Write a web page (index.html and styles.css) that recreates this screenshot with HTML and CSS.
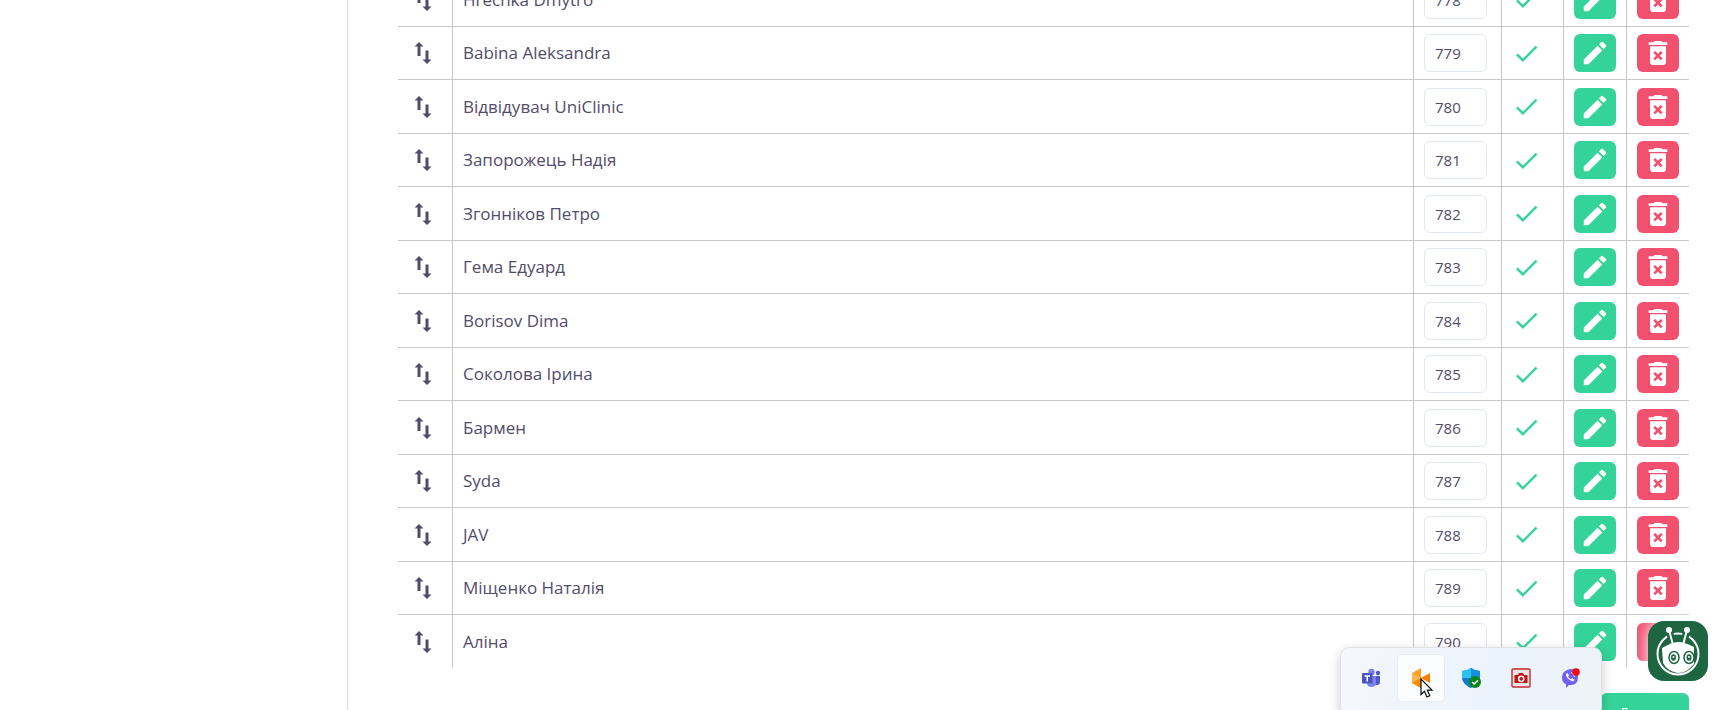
FILE: index.html
```html
<!DOCTYPE html>
<html lang="uk">
<head>
<meta charset="utf-8">
<meta name="viewport" content="width=device-width, initial-scale=1">
<title>Співробітники</title>
<link rel="stylesheet" href="styles.css">
</head>
<body>
<svg class="sprite" aria-hidden="true">
  <symbol id="sort" viewBox="0 0 18 22"><path d="M5 0 9.500 4.500H6.500V14H3.500V4.500H.5zM13 22 8.500 17.500H11.500V8.500H14.500V17.500H17.500z"/></symbol>
  <symbol id="check" viewBox="0 0 24 24"><path d="M9 16.200 4.800 12l-1.400 1.400L9 19 21 7l-1.400-1.400z"/></symbol>
  <symbol id="pencil" viewBox="0 0 24 24"><path d="M3 17.250V21h3.750L17.810 9.940l-3.750-3.750zM20.710 7.040a1 1 0 0 0 0-1.410l-2.340-2.340a1 1 0 0 0-1.410 0l-1.830 1.830 3.750 3.750z"/></symbol>
  <symbol id="trash" viewBox="0 0 24 24"><path fill-rule="evenodd" d="M6 19c0 1.100.9 2 2 2h8c1.100 0 2-.9 2-2V7H6zm2.460-7.120 1.410-1.410L12 12.590l2.120-2.120 1.410 1.410L13.410 14l2.120 2.120-1.410 1.410L12 15.410l-2.120 2.120-1.410-1.410L10.590 14zM15.500 4l-1-1h-5l-1 1H5v2h14V4z"/></symbol>
</svg>
<div class="layout">
  <aside class="sidebar"></aside>
  <main class="content">
    <table class="staff">
      <colgroup><col class="col-sort"><col><col class="col-order"><col class="col-check"><col class="col-edit"><col class="col-delete"></colgroup>
      <tbody id="rows"></tbody>
    </table>
    <div class="footer"><button class="submit" type="button">Додати</button></div>
  </main>
</div>

<button class="bot" type="button" aria-label="Чат-бот">
  <svg viewBox="0 0 60 60" aria-hidden="true">
    <circle cx="30" cy="33" r="20.500" fill="none" stroke="#fff" stroke-width="2"/>
    <path d="M21 9 25 24M39 9 35 24" stroke="#1e6542" stroke-width="7"/>
    <path d="M21 9 25 24M39 9 35 24" stroke="#fff" stroke-width="2"/>
    <circle cx="21" cy="9" r="3" fill="#fff"/><circle cx="39" cy="9" r="3" fill="#fff"/>
    <path d="M14 27Q24 21 30 21T46 26V43Q39 52 30 52 19 50 15 42z" fill="#fff"/>
    <g fill="#fff" stroke="#1e6542" stroke-width="1.500"><ellipse cx="26" cy="36.500" rx="5" ry="6"/><ellipse cx="41" cy="36.500" rx="5" ry="6"/></g>
    <ellipse cx="25.500" cy="36.500" rx="2.500" ry="3.200" fill="#1e6542"/><ellipse cx="41" cy="36.500" rx="2.500" ry="3.200" fill="#1e6542"/>
    <circle cx="25.500" cy="36" r="1" fill="#fff"/><circle cx="41" cy="36" r="1" fill="#fff"/>
  </svg>
</button>

<div class="tray">
  <button class="app" type="button" aria-label="Teams">
    <svg viewBox="0 0 20 20" aria-hidden="true"><circle cx="10.500" cy="4" r="3.200" fill="#7b83eb"/><circle cx="17" cy="5" r="2.200" fill="#5059c9"/><path d="M13 8h6v6q0 3-3 3h-3z" fill="#5059c9"/><path d="M6 8h9v7q0 4-4.500 4T6 15z" fill="#7b83eb"/><rect x="1" y="5" width="10.500" height="10.500" rx="1" fill="#4b53bc"/><path d="M3.500 8h5.500M6.250 8v5.500" stroke="#fff" stroke-width="1.500"/></svg>
  </button>
  <button class="app active" type="button" aria-label="Застосунок">
    <svg viewBox="0 0 20 20" aria-hidden="true"><path d="M1 5 10 0V20L1 15z" fill="#ffa126"/><path d="M1 5 10 10 1 15z" fill="#ffb650"/><path d="M1 15 10 10V20z" fill="#f58a08"/><path d="M10 10 19 5V15z" fill="#ff7b00"/></svg>
    <svg class="cursor" viewBox="0 0 13 20" aria-hidden="true"><path d="M1 1V16.500L4.500 13.200 7 19 9.800 17.800 7.300 12.200H12z" fill="#fff" stroke="#111" stroke-width="1.200"/></svg>
  </button>
  <button class="app" type="button" aria-label="Безпека">
    <svg viewBox="0 0 20 20" aria-hidden="true"><path d="M10 0Q14 3 19 3V9Q19 16 10 20 1 16 1 9V3Q6 3 10 0z" fill="#1682d4"/><path d="M10 0V10H1V3Q6 3 10 0z" fill="#2bc3ee"/><path d="M10 0Q14 3 19 3V10H10z" fill="#168fdc"/><path d="M1 10h9V20Q2 16 1 10z" fill="#117bd0"/><circle cx="14" cy="14" r="6" fill="#0b8420"/><path d="m11.200 14 2 2 3.800-3.800" fill="none" stroke="#fff" stroke-width="1.500"/></svg>
  </button>
  <button class="app" type="button" aria-label="Знімок екрана">
    <svg viewBox="0 0 20 20" aria-hidden="true"><rect x="1" y="1" width="18" height="18" rx="1" fill="#e9e4e3" stroke="#c5292d" stroke-width="1.400"/><path d="M3.500 7H7L8 5h4l1 2h3.500v8h-13z" fill="#bd1518"/><circle cx="10.200" cy="10.800" r="2.600" fill="#bd1518" stroke="#fff" stroke-width="1.500"/></svg>
  </button>
  <button class="app" type="button" aria-label="Viber">
    <svg viewBox="0 0 20 20" aria-hidden="true"><path d="M9 1Q17 1 17 9T10 17H8L5 20V16Q1 15 1 9T9 1z" fill="#7360f2"/><path d="M5.500 5.500Q4 7 6.500 10T12 13.500L13.500 12 11.300 10.300 10 11.200Q8 10.500 7 8.500L8 7.200 6.500 5z" fill="#fff"/><path d="M10 4.500Q13.500 5 13.500 9" fill="none" stroke="#fff"/><circle cx="15" cy="4" r="3.800" fill="#f80712"/></svg>
  </button>
</div>
<script src="app.js"></script>
</body>
</html>
```
FILE: app.js
```js
const names = ["Hrechka Dmytro", "Babina Aleksandra", "Відвідувач UniClinic", "Запорожець Надія", "Згонніков Петро", "Гема Едуард", "Borisov Dima", "Соколова Ірина", "Бармен", "Syda", "JAV", "Міщенко Наталія", "Аліна"];
const icon = (id) => `<svg class="icon-${id}" aria-hidden="true"><use href="#${id}"/></svg>`;
document.getElementById("rows").innerHTML = names.map((name, i) => `
<tr>
  <td>${icon("sort")}</td>
  <td><label for="order-${i}">${name}</label></td>
  <td><input class="order" id="order-${i}" type="text" value="${778 + i}"></td>
  <td>${icon("check")}</td>
  <td><button class="action edit" type="button" aria-label="Редагувати">${icon("pencil")}</button></td>
  <td><button class="action delete" type="button" aria-label="Видалити">${icon("trash")}</button></td>
</tr>`).join("");
```
FILE: styles.css
```css
* { box-sizing: border-box; }
body { margin: 0; color: #524c6b; background: #fff; font: 17px/24px "Open Sans", "Noto Sans", sans-serif; }
.sprite { display: none; }
.layout { display: flex; height: 100vh; overflow: hidden; }
.sidebar { flex: 0 0 348px; border-right: 1px solid #dedede; }
.content { flex: 1; padding: 0 38px 0 50px; margin-top: -27px; }
.staff { width: 100%; table-layout: fixed; border-collapse: separate; border-spacing: 0; }
.col-sort { width: 55px; }
.col-order { width: 88px; }
.col-check { width: 62px; }
.col-edit { width: 63px; }
.col-delete { width: 62px; }
tr { height: 54px; }
tr:nth-child(even), tr:last-child { height: 53px; }
td { padding: 0 10px; border-right: 1px solid #c8c8c8; border-bottom: 1px solid #c8c8c8; vertical-align: middle; }
td:last-child { border-right: 0; }
tr:last-child td { border-bottom: 0; }
svg { display: block; fill: currentColor; }
.icon-sort { width: 18px; height: 22px; margin-left: 6px; }
.icon-check { width: 29px; height: 29px; color: #34d399; }
.icon-pencil { width: 30px; height: 30px; }
.icon-trash { width: 32px; height: 32px; }
.order { display: block; width: 63px; height: 38px; padding: 0 10px; border: 1px solid #e2e8f0; border-radius: 6px; font: 15px "Open Sans", "Noto Sans", sans-serif; color: inherit; }
.action { display: grid; place-items: center; width: 42px; height: 38px; padding: 0; border: 0; border-radius: 6px; color: #fff; }
.edit, .submit { background: #34d399; }
.delete { background: #f1506e; }
.footer { display: flex; justify-content: flex-end; padding-top: 25px; }
.submit { width: 88px; height: 38px; border: 0; border-radius: 6px; color: #fff; font: 15px "Open Sans", "Noto Sans", sans-serif; }
.bot { position: absolute; right: 19px; bottom: 29px; width: 60px; height: 60px; padding: 0; border: 0; border-radius: 16px; background: #1e6542; box-shadow: 0 0 16px #fff; }
.tray { position: absolute; right: 125px; bottom: -7px; display: flex; gap: 2px; padding: 6px 6px 14px; background: linear-gradient(110deg, #f5f7fb, #ebf3fc 60%, #edf3f8); border: 1px solid #e0e2e6; border-radius: 9px; box-shadow: 0 4px 12px #0003; }
.app { position: relative; display: grid; place-items: center; width: 48px; height: 48px; padding: 0; border: 1px solid transparent; border-radius: 5px; background: none; }
.app svg { width: 20px; height: 20px; }
.app.active { background: #fafcfe; border-color: #e9edf2; }
.app .cursor { position: absolute; left: 22px; top: 23px; width: 13px; height: 20px; }
```
